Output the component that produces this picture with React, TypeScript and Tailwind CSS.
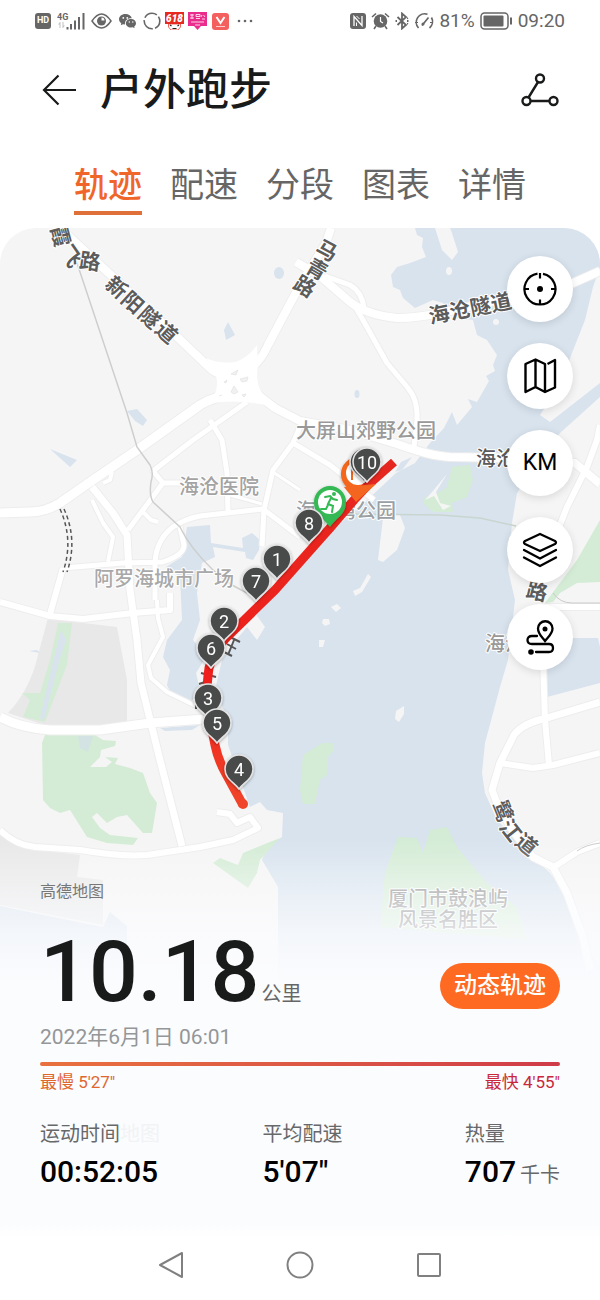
import { useState } from "react";

const tabs = ["轨迹", "配速", "分段", "图表", "详情"];

const roads = [
  { d: "M60 228L100 265L170 330L212 370Q225 378 238 380", w: 8 },
  { d: "M331 228L326 243L300 285L268 345Q258 368 238 375", w: 8 },
  { d: "M240 392Q215 396 200 405L137 450L90 482L60 503Q45 512 30 512L0 513", w: 9 },
  { d: "M245 385L275 408L300 421L350 430L397 444Q430 456 450 457L510 458L575 463L600 484", w: 8 },
  { d: "M296 262L320 276L350 302Q367 315 397 318Q420 318 450 311L573 283L600 271", w: 8 },
  { d: "M325 276L350 285Q362 292 364 308", w: 5 },
  { d: "M354 305L363 320L387 363L408 388Q418 400 417 420L414 447", w: 5 },
  { d: "M92 487L113 513L127 535L130 590L137 640L141 683L160 760L182 846", w: 7 },
  { d: "M128 530L163 483L153 471L193 440L247 402", w: 5 },
  { d: "M160 483L180 483M210 420L222 440L227 473L228 512", w: 5 },
  { d: "M63 568L123 563L163 562Q184 555 184 545L180 527M155 600L155 563Q156 540 173 527Q185 519 200 516L263 509L300 537", w: 5 },
  { d: "M262 546L264 510L273 470L293 443L302 422M293 443L330 465L374 500", w: 5 },
  { d: "M273 472L300 490M230 495L262 504", w: 3 },
  { d: "M0 602L50 616L83 619L133 613L170 610L170 593M63 568L50 614", w: 6 },
  { d: "M157 600L158 618L163 637L148 665L151 678L167 692L196 706", w: 4 },
  { d: "M0 717Q20 728 50 730L100 730L150 723L205 719", w: 9 },
  { d: "M0 830Q15 845 35 847L80 850Q120 857 147 855L200 847L233 840L258 828L250 817L237 823L230 814L217 812", w: 6 },
  { d: "M92 500L103 523L113 537L108 562M143 512L151 520L158 522M103 483L110 480L112 472", w: 4 },
  { d: "M600 702L547 718Q523 723 514 735L500 763L492 790L497 803L512 830L533 857L553 867L567 893L583 937L590 970", w: 7 },
  { d: "M500 763L533 768L553 765L600 753M543 660L545 720L549 765M554 867L577 852L600 843", w: 6 },
  { d: "M600 425L597 440L587 467L567 507L556 535M545 607L600 607", w: 6 },
];

const mapLabels = [
  { text: "大屏山郊野公园", x: 366, y: 430, fill: "#999999" },
  { text: "海沧医院", x: 219, y: 486, fill: "#a3a3a3" },
  { text: "海沧湾公园", x: 346, y: 510, fill: "#9a9fa4" },
  { text: "阿罗海城市广场", x: 164, y: 578, fill: "#a8a8a8" },
  { text: "海沧", x: 505, y: 643, fill: "#999999" },
  { text: "海沧", x: 496, y: 458, fill: "#595959" },
  { text: "厦门市鼓浪屿", x: 448, y: 898, fill: "#8c8c8c" },
  { text: "风景名胜区", x: 448, y: 919, fill: "#808080" },
];

// characters that follow a road, each with its own heading
const roadLabels = [
  { text: "霞", x: 61, y: 236, r: 75 },
  { text: "飞", x: 71, y: 256, r: 55 },
  { text: "路", x: 90, y: 261, r: 8 },
  { text: "新", x: 117, y: 287, r: 42 },
  { text: "阳", x: 133, y: 302, r: 42 },
  { text: "隧", x: 150, y: 317, r: 42 },
  { text: "道", x: 167, y: 332, r: 42 },
  { text: "马", x: 327, y: 250, r: 28 },
  { text: "青", x: 317, y: 269, r: 30 },
  { text: "路", x: 305, y: 286, r: 32 },
  { text: "海沧隧道", x: 470, y: 308, r: -11 },
  { text: "鹭", x: 503, y: 811, r: 68 },
  { text: "江", x: 511, y: 830, r: 52 },
  { text: "道", x: 527, y: 844, r: 40 },
  { text: "路", x: 537, y: 591, r: 14 },
];

const markers = [
  { km: 1, x: 277, y: 560 },
  { km: 7, x: 256, y: 582 },
  { km: 8, x: 309, y: 524 },
  { km: 2, x: 224, y: 622 },
  { km: 6, x: 211, y: 649 },
  { km: 3, x: 208, y: 699 },
  { km: 5, x: 217, y: 724 },
  { km: 4, x: 239, y: 770 },
  { km: 9, x: 364, y: 463 },
  { km: 10, x: 367, y: 463 },
];

const pin = "M0 19C-4 13 -14 9 -14 -1A14 14 0 0 1 14 -1C14 9 4 13 0 19Z";

function StatusBar() {
  return (
    <div className="flex h-[42px] items-center justify-between px-[35px] text-[#666666]">
      <div className="flex items-center gap-1.5">
        <span className="flex h-4 w-4 items-center justify-center rounded-[3px] bg-[#666666] text-[9px] font-bold text-white">
          HD
        </span>
        <svg width="28" height="20" viewBox="0 0 28 20" fill="currentColor">
          <text x="0" y="9" fontSize="9" fontWeight="700" fontFamily="Roboto">
            4G
          </text>
          <path d="M3 11L1 13.500H2.500V17H3.500V11ZM6 17L8 14.500H6.500V11H5.500V17Z" opacity=".4" />
          <path d="M9.500 16h2v2.500h-2zM13 13h2v5.500h-2zM17 9.500h2v9h-2zM21 6h2v12.500h-2zM25.500 2h2v16.500h-2z" />
        </svg>
        <svg width="21" height="16" viewBox="0 0 21 16" fill="none" stroke="currentColor" strokeWidth="1.500">
          <path d="M1 8Q10.500 -6 20 8Q10.500 22 1 8Z" />
          <circle cx="10.500" cy="8" r="4.500" fill="currentColor" stroke="none" />
          <path d="M10.500 7.500V4.500A3 3 0 0 1 13.500 7.500Z" fill="#fff" stroke="none" />
        </svg>
        <svg width="19" height="16" viewBox="0 0 19 16" fill="currentColor">
          <path d="M7.500 1C3.500 1 1 3.500 1 6.300C1 8 2 9.400 3.300 10.300L2.800 12.300L5 11.200L7 11.500C6.500 7.500 9.500 5 13.800 5.200C13.200 2.700 10.700 1 7.500 1Z" />
          <path d="M13 6C10 6 7.800 8 7.800 10.300S10 14.600 13 14.600L14.800 14.300L16.600 15.200L16.200 13.600C17.400 12.800 18 11.600 18 10.300C18 8 16 6 13 6Z" />
          <g fill="#fff">
            <circle cx="5.300" cy="4.900" r=".9" />
            <circle cx="9.300" cy="4.900" r=".9" />
            <circle cx="11.300" cy="9" r=".7" />
            <circle cx="14.800" cy="9" r=".7" />
          </g>
        </svg>
        <div className="flex items-center gap-1">
          <svg width="18" height="18" viewBox="0 0 18 18" fill="none" stroke="currentColor" strokeWidth="1.600">
            <circle cx="9" cy="9" r="7.800" strokeDasharray="14 2.336" strokeDashoffset="5" />
          </svg>
          <svg width="19" height="18" viewBox="0 0 19 18">
            <rect width="19" height="12" fill="#e62a20" />
            <text x="9.500" y="10" fontSize="10" fontWeight="900" fontStyle="italic" fontFamily="Roboto" fill="#fff" textAnchor="middle">
              618
            </text>
            <path d="M3.500 12h12v3l-2.500 3h-7l-2.500-3z" fill="#fff" stroke="#e62a20" strokeWidth=".7" />
            <path d="M5 13l1.500 1M14 13l-1.500 1M7.500 16.500h4" stroke="#222" strokeWidth="1.200" />
          </svg>
          <svg width="20" height="18" viewBox="0 0 20 18" fill="none">
            <path d="M0 0H19V14H13L9.500 18L6 14H0Z" fill="#ea2d8c" />
            <path d="M2 3h4M4 2v5M2 6h4M8 2.500h4v2H8zM8 6.500h4M14 3l-1 2M15.500 3l1.500 2M14 7h3M3 10h13M7 13h5" stroke="#fff" strokeWidth=".8" />
          </svg>
          <svg width="17" height="17" viewBox="0 0 17 17" fill="none">
            <rect width="17" height="17" rx="3" fill="#f4605d" />
            <path d="M4.500 4L8.500 10L12.500 4" stroke="#fff" strokeWidth="2" />
            <path d="M4 13.500H13" stroke="#fff" opacity=".7" />
          </svg>
        </div>
        <svg width="16" height="4" viewBox="0 0 16 4" fill="currentColor" className="ml-0.5">
          <circle cx="2" cy="2" r="1.300" />
          <circle cx="8" cy="2" r="1.300" />
          <circle cx="14" cy="2" r="1.300" />
        </svg>
      </div>

      <div className="flex items-center gap-[5px] font-[Roboto,sans-serif] text-[19px]">
        <svg width="16" height="16" viewBox="0 0 16 16" fill="none">
          <rect width="16" height="16" rx="3" fill="currentColor" />
          <path d="M4 13V3.500L12 12.500V3" stroke="#fff" strokeWidth="1.300" />
          <path d="M6.500 3L9.500 6M6.500 13V9.500" stroke="#fff" />
        </svg>
        <svg width="19" height="18" viewBox="0 0 19 18" fill="none" stroke="currentColor" strokeWidth="1.600">
          <circle cx="9.500" cy="9" r="6.800" fill="currentColor" stroke="none" />
          <path d="M1 5L5 1.500M18 5L14 1.500M5 14L3 17M14 14L16 17" />
          <path d="M9.500 5V9.500L12 11" stroke="#fff" strokeWidth="1.200" />
        </svg>
        <svg width="14" height="18" viewBox="0 0 14 18" fill="none" stroke="currentColor" strokeWidth="1.800">
          <path d="M2.500 5L11 13L7 16.500V1.500L11 5L2.500 13" />
          <path d="M0.500 9h1.500M12 9h1.500M12 6.500l1-.5M12 11.500l1 .5" />
        </svg>
        <svg width="20" height="18" viewBox="0 0 20 18" fill="none" stroke="currentColor" strokeWidth="1.700">
          <path d="M4.500 16A8.500 8.500 0 0 1 13.500 2.200M17.500 5.500A8.500 8.500 0 0 1 15.500 16M8 13.500L14.500 5.500" />
          <path d="M1 10.500h3M16 10.500h3" strokeWidth="1" />
          <circle cx="9" cy="12" r="1.500" fill="currentColor" stroke="none" />
        </svg>
        <span>81%</span>
        <svg width="33" height="18" viewBox="0 0 33 18" fill="none" stroke="currentColor" strokeWidth="1.500">
          <rect x="1" y="1" width="27" height="16" rx="3.500" />
          <rect x="3.500" y="3.500" width="20" height="11" rx="1" fill="currentColor" stroke="none" />
          <path d="M31 5.500V12.500" strokeWidth="2" />
        </svg>
        <span>09:20</span>
      </div>
    </div>
  );
}

function TrackMap() {
  return (
    <svg
      viewBox="0 228 600 780"
      className="col-start-1 row-start-1 w-full self-start rounded-t-[36px]"
      aria-label="高德地图"
    >
      <defs>
        <linearGradient id="route" x1="0" y1="460" x2="0" y2="806" gradientUnits="userSpaceOnUse">
          <stop offset="0" stopColor="#e5271f" />
          <stop offset=".65" stopColor="#f0201c" />
          <stop offset="1" stopColor="#f0452a" />
        </linearGradient>
        <filter id="shade" x="-30%" y="-30%" width="160%" height="160%">
          <feDropShadow dx="0" dy="1" stdDeviation="1.500" floodOpacity=".35" />
        </filter>
      </defs>
      <rect y="228" width="600" height="780" fill="#f6f5f5" />

      {/* Built-up areas */}
      <path d="M48 618L75 622L117 627L127 680L127 725L60 730L8 713Q30 690 38 655Z" fill="#e9e8e8" />
      <path d="M0 834L30 849L80 855L77 877L103 880V925L0 905Z" fill="#e8e8e8" />

      {/* Water */}
      <g fill="#d8e3ee">
        <path d="M415 228L417 235L423 238L422 247L426 257L410 263L397 267L391 275L393 287L400 290L403 298L415 308L433 300L443 303L455 318L473 320L477 335L487 340L497 355L493 365L495 371L486 376L489 381L477 402L468 399L472 407L457 425L452 412L444 428L430 443L415 463L396 473L365 502L330 532L280 587L255 613L265 627L257 640L247 627L232 645L222 660L215 690L228 720V745L250 807L260 802L267 810L283 813L282 837L267 847L262 860L278 887V1008H600V965L587 950L563 890L550 873L533 857L497 820L485 793L482 773L485 743L500 687L508 660L513 617L515 600L508 570L512 523L517 493L540 460L560 433L600 397V228Z" />
        <path d="M187 527L210 525L211 543L243 548L242 538L252 533L260 540L259 550L253 560L246 558L245 552L213 547L215 557L202 563L197 593L200 620L193 640L202 650L204 660L196 673L200 690L190 703L173 697L167 685L170 670L163 657L167 640L182 620L180 577L166 567L182 557Z" />
        <ellipse cx="279" cy="273" rx="5" ry="6" />
        <path d="M228 322L235 335L226 340L224 330ZM127 411L137 409L147 420L143 426L135 421ZM50 449L77 460L70 467Z" />
        <path d="M160 728L200 725L192 730L165 731ZM29 651L37 650L40 653Z" />
        <ellipse cx="357" cy="394" rx="2.500" ry="4" />
        <path d="M0 906L103 927L110 912L127 926V1008H0Z" />
      </g>

      {/* Land across the channel and small islands */}
      <g fill="#f6f5f5">
        <path d="M600 267L593 287L585 320L572 353L560 385L540 415L550 422L600 383Z" />
        <path d="M435 228L442 250L452 260L458 252L452 233L450 228Z" />
        <ellipse cx="449" cy="271" rx="3" ry="4" />
        <circle cx="496" cy="322" r="3" />
        <path d="M383 518Q392 512 400 515L405 528L397 550L383 562L378 560Z" />
        <path d="M368 574L371 577L362 592L355 596L353 591L360 588Z" />
        <path d="M331 607L337 604L341 608L336 612Z" />
        <path d="M323 619L329 619L330 624L325 626L322 623Z" />
        <path d="M319 640L325 640L323 647L319 647Z" />
        <path d="M404 706L396 711L395 719L399 722L404 714Z" />
        <path d="M395 472L401 462L412 457L402 470Z" fill="#d8e3ee" />
      </g>
      <path d="M573 638H598L600 647V683L547 697V660Z" fill="#d8e3ee" />

      {/* Parks */}
      <g fill="#d4ecd5">
        <path d="M58 623H72L67 665L45 722L23 717L30 700L22 693L40 693L50 660Z" />
        <path d="M45 735H95L103 740L116 741L115 746L101 750L100 757L90 767H106L112 762L105 757L118 758L115 764L130 768L143 773L150 793L157 803L152 833H143L127 815L117 817L107 823L97 813L92 817L100 828L110 835L138 838L133 845L107 843L87 837L70 810L60 813L50 808L43 800L42 743Z" />
        <path d="M213 863L220 858L238 865L243 853L255 848L280 838L260 860L257 873L248 888Z" />
        <path d="M600 520L577 560L545 603L553 602L560 593L577 583L600 582Z" />
        <path d="M452 467L470 465L473 480L467 497L452 503L453 512H433L423 503L425 497L440 492L447 487Z" />
        <path d="M333 743H322L303 755L300 790L303 804H315L320 780L327 775L328 757L334 750Z" />
        <path d="M398 837L417 838L423 853L430 830L447 827L457 847L473 867L487 883L517 907L527 940L380 927L385 873Z" />
      </g>
      <path d="M61 630L66 640L58 665L44 720L40 718L53 662Z" fill="#d8e3ee" />
      <path d="M78 736H93L88 752L80 748Z" fill="#d3e3e3" />
      <path d="M447 474L436 492L440 503L451 506L443 510L434 496L425 500L432 492Z" fill="#f6f5f5" />

      {/* Roads */}
      <g fill="none" strokeLinejoin="round">
        {roads.map((road) => (
          <path key={road.d} d={road.d} stroke="#eeeded" strokeWidth={road.w + 2} />
        ))}
        {roads.map((road) => (
          <path key={road.d} d={road.d} stroke="#ffffff" strokeWidth={road.w} />
        ))}
      </g>
      <path d="M206 358Q218 364 236 362Q250 356 257 345L258 366Q255 382 262 393Q272 404 284 410Q262 403 244 402Q212 400 200 408Q217 398 217 384Q218 372 206 358Z" fill="#fff" />
      <path d="M231 374L238 370L236 375ZM240 379L248 377L247 381L242 382ZM234 386L238 392L234 394L231 392ZM224 382L227 380L226 383ZM242 395L246 394L244 397ZM219 396L222 395" fill="#f2f1f1" stroke="#e3e3e3" strokeWidth=".7" />
      <path d="M0 245L12 234L28 228H0Z" fill="#fff" />
      <path d="M7 242L26 232" stroke="#f6f5f5" strokeWidth="2" />

      {/* Rail and metro */}
      <g fill="none">
        <path d="M77 263L100 332L127 413L137 447L150 465Q154 472 151 482Q149 495 153 502L180 527Q190 548 213 570L232 585L247 593" stroke="#cdcfcd" strokeWidth="1.500" />
        <path d="M350 514L440 515L480 518L516 526" stroke="#c8d6cf" strokeWidth="1.500" />
        <path d="M553 593Q560 603 572 603H600M577 851Q585 845 600 843" stroke="#c9cac9" />
        <path d="M60 509Q74 540 63 572M64 509Q78 540 67 572" stroke="#555" strokeWidth="1.500" strokeDasharray="4 3" />
      </g>

      {/* Labels */}
      <g
        fontFamily="'Noto Sans CJK SC', sans-serif"
        fontSize="20"
        fontWeight="500"
        textAnchor="middle"
        stroke="#fff"
        strokeWidth="2"
        strokeLinejoin="round"
        paintOrder="stroke"
      >
        {mapLabels.map((label) => (
          <text key={label.text + label.y} x={label.x} y={label.y + 8} fill={label.fill}>
            {label.text}
          </text>
        ))}
        {roadLabels.map((label) => (
          <text
            key={label.text + label.x}
            y="8"
            fill="#5c5c5c"
            fontSize="21"
            fontWeight="700"
            transform={`translate(${label.x} ${label.y}) rotate(${label.r})`}
          >
            {label.text}
          </text>
        ))}
      </g>
      <path d="M230 637L240 642M227 644L236 649M222 651L232 656M201 673L216 677M199 684L208 681M196 702L196 709M234 640L228 655" fill="none" stroke="#555" strokeWidth="2" />

      {/* Finish, route and start */}
      <g filter="url(#shade)">
        <path d="M358 457A17 17 0 0 0 341 474C341 486 352 490 357 498C364 490 375 486 375 474A17 17 0 0 0 358 457Z" fill="#f4661f" />
        <circle cx="358" cy="473" r="12" fill="#fff" />
        <path d="M352 480V466" stroke="#f4661f" strokeWidth="2" />
      </g>
      <path
        d="M394 462L368 485L354 500L330 528L322 537L275 590L226 638Q214 650 209 668Q206 690 207 705L215 745Q218 760 226 774L243 805"
        fill="none"
        stroke="url(#route)"
        strokeWidth="9"
        strokeLinejoin="round"
      />
      <circle cx="243" cy="804" r="5" fill="#f0452a" />
      <path d="M344 487L376 484L356 502Z" fill="#f4661f" />
      <g filter="url(#shade)">
        <path d="M330 486A16 16 0 0 0 314 502C314 515 324 518 330 527C336 518 346 515 346 502A16 16 0 0 0 330 486Z" fill="#34b955" />
        <circle cx="330" cy="502" r="12" fill="#fff" />
        <circle cx="334" cy="494" r="2" fill="#34b955" />
        <path d="M325 497L330 496L333 499L337 500M331 498L328 504L333 506L332 512M328 505L326 509L321 509" fill="none" stroke="#34b955" strokeWidth="2" strokeLinecap="round" />
      </g>

      {/* Kilometre markers */}
      {markers.map((m) => (
        <g key={m.km} transform={`translate(${m.x} ${m.y})`} filter="url(#shade)">
          <path d={pin} fill="#4a4b4b" stroke="#e3e3e3" strokeWidth="1.500" />
          {m.km !== 9 && (
            <text y="6" fontSize="18" fontFamily="Roboto, sans-serif" fill="#fff" textAnchor="middle">
              {m.km}
            </text>
          )}
        </g>
      ))}
    </svg>
  );
}

const controlClasses =
  "flex h-[66px] w-[66px] items-center justify-center rounded-full bg-white text-black shadow-[0_2px_8px_rgba(0,0,0,0.12)]";

function MapControls() {
  return (
    <div className="flex flex-col items-end gap-[21px] pt-7 pr-[27px]">
      <button type="button" aria-label="定位" className={controlClasses}>
        <svg width="34" height="34" viewBox="0 0 34 34" fill="none" stroke="currentColor" strokeWidth="2.200">
          <path d="M20 1.800A15.500 15.500 0 1 1 14.500 1.700M17 1V6.500M17 27.500V33M1 17H6M28 17H33" />
          <circle cx="17" cy="17" r="3" fill="currentColor" stroke="none" />
        </svg>
      </button>
      <button type="button" aria-label="地图类型" className={controlClasses}>
        <svg width="34" height="36" viewBox="0 0 34 36" fill="none" stroke="currentColor" strokeWidth="2.400" strokeLinejoin="round">
          <path d="M24.500 6L32 2V29.500L22 34L12.500 29L2.500 34V6L12.500 1.500L22 6V34M12.500 1.500V29" />
        </svg>
      </button>
      <button type="button" aria-label="公里标记" className={controlClasses}>
        <span className="font-[Roboto,sans-serif] text-[23px]">KM</span>
      </button>
      <button type="button" aria-label="图层" className={controlClasses}>
        <svg width="36" height="36" viewBox="0 0 36 36" fill="none" stroke="currentColor" strokeWidth="2.300" strokeLinejoin="round" strokeLinecap="round">
          <path d="M18 2L33 9Q35 10.500 33 12L18 19L3 12Q1 10.500 3 9Z" />
          <path d="M2 18L18 26.500L34 18M2 25.500L18 34L34 25.500" />
        </svg>
      </button>
      <button type="button" aria-label="路线" className={controlClasses}>
        <svg width="30" height="36" viewBox="0 0 30 36" fill="none" stroke="currentColor" strokeWidth="2.300" strokeLinecap="round">
          <path d="M20 22C17 18 13 15 13 9.500A7.200 7.200 0 0 1 27.500 9.500C27.500 15 23 18 20 22Z" />
          <circle cx="20" cy="10" r="2.500" fill="currentColor" stroke="none" />
          <path d="M12 17H7Q2.500 17 2.500 21T7 25H24Q28 25 28 29T24 33H11" />
          <circle cx="6" cy="33" r="2.800" fill="currentColor" stroke="none" />
        </svg>
      </button>
    </div>
  );
}

function Summary() {
  return (
    <div className="mt-[170px] bg-[linear-gradient(to_bottom,rgba(251,252,254,0)_0px,rgba(251,252,254,0.5)_55px,rgba(251,252,254,0.8)_95px,#fbfcfe_145px)] px-10 pt-[38px] pb-7">
      <p className="text-base leading-7 text-[#777777]">高德地图</p>

      <div className="mt-[26px] flex items-end justify-between">
        <p className="flex items-baseline gap-0.5">
          <span className="text-[86px] leading-[80px] font-medium text-[#191a1a]">10.18</span>
          <span className="text-[20px] leading-6 text-[#666666]">公里</span>
        </p>
        <button
          type="button"
          className="mb-[3px] h-[46px] rounded-full bg-[#ff6a22] px-[14px] text-[23px] leading-8 font-medium text-white"
        >
          动态轨迹
        </button>
      </div>

      <p className="mt-[11px] text-[21px] leading-7 text-[#949698]">2022年6月1日 06:01</p>

      <div className="mt-[11px] h-1 rounded-full bg-gradient-to-r from-[#e9713f] to-[#cf3b48]" />
      <div className="mt-1 flex justify-between text-[17px] leading-6">
        <span className="text-[#e0662f]">最慢 5'27"</span>
        <span className="text-[#c9283a]">最快 4'55"</span>
      </div>

      <dl className="mt-6 grid grid-cols-[11fr_10fr_auto] text-[20px] text-[#66686a]">
        <div>
          <dt className="leading-8">
            运动时间
            <span aria-hidden="true" className="text-[#f1f3f5]">
              地图
            </span>
          </dt>
          <dd className="mt-0.5 text-[30px] leading-10 font-medium text-black">00:52:05</dd>
        </div>
        <div>
          <dt className="leading-8">平均配速</dt>
          <dd className="mt-0.5 text-[30px] leading-10 font-medium text-black">5'07"</dd>
        </div>
        <div>
          <dt className="leading-8">热量</dt>
          <dd className="mt-0.5 flex items-baseline gap-1 leading-10">
            <span className="text-[30px] font-medium text-black">707</span>
            <span>千卡</span>
          </dd>
        </div>
      </dl>
    </div>
  );
}

export default function App() {
  const [active, setActive] = useState("轨迹");

  return (
    <div className="min-h-screen bg-white font-[Roboto,'Noto_Sans_CJK_SC',sans-serif]">
      <StatusBar />

      <header className="flex h-24 items-center justify-between px-10">
        <div className="flex items-center gap-6">
          <button type="button" aria-label="返回">
            <svg width="36" height="32" viewBox="0 0 36 32" fill="none" stroke="#191a1a" strokeWidth="2.200">
              <path d="M18.500 1.500L4 16L18.500 30.500M4 16H36" />
            </svg>
          </button>
          <h1 className="text-[43px] leading-[60px] font-medium text-[#191a1a]">户外跑步</h1>
        </div>
        <button type="button" aria-label="分享">
          <svg width="40" height="34" viewBox="0 0 40 34" fill="none" stroke="#191a1a" strokeWidth="2.400">
            <circle cx="20" cy="5.500" r="4" />
            <circle cx="6.500" cy="28" r="4" />
            <circle cx="33.500" cy="28" r="4" />
            <path d="M18 9L8.500 24.500M10.500 28H29.500" />
          </svg>
        </button>
      </header>

      <div role="tablist" className="flex justify-center gap-7 pt-[23px] pb-[13px]">
        {tabs.map((tab) => (
          <button
            key={tab}
            type="button"
            role="tab"
            aria-selected={tab === active}
            onClick={() => setActive(tab)}
            className={`border-b-4 pb-0.5 text-[34px] leading-[48px] ${
              tab === active
                ? "border-[#e0703a] font-medium text-[#f0652a]"
                : "border-transparent text-[#666666]"
            }`}
          >
            {tab}
          </button>
        ))}
      </div>

      <main className="grid grid-cols-1">
        <TrackMap />
        <div className="relative col-start-1 row-start-1">
          <MapControls />
          <Summary />
        </div>
      </main>

      <nav className="flex items-center justify-center gap-[102px] bg-gradient-to-b from-[#fbfcfe] to-white to-20% pt-7 pb-4 text-[#808080]">
        <button type="button" aria-label="返回">
          <svg width="26" height="28" viewBox="0 0 26 28" fill="none" stroke="currentColor" strokeWidth="2" strokeLinejoin="round">
            <path d="M24 2V26L2 14Z" />
          </svg>
        </button>
        <button type="button" aria-label="主屏幕">
          <svg width="28" height="28" viewBox="0 0 28 28" fill="none" stroke="currentColor" strokeWidth="2">
            <circle cx="14" cy="14" r="12.500" />
          </svg>
        </button>
        <button type="button" aria-label="最近任务">
          <svg width="26" height="28" viewBox="0 0 26 28" fill="none" stroke="currentColor" strokeWidth="2">
            <rect x="2" y="3" width="22" height="22" rx="1" />
          </svg>
        </button>
      </nav>
    </div>
  );
}
